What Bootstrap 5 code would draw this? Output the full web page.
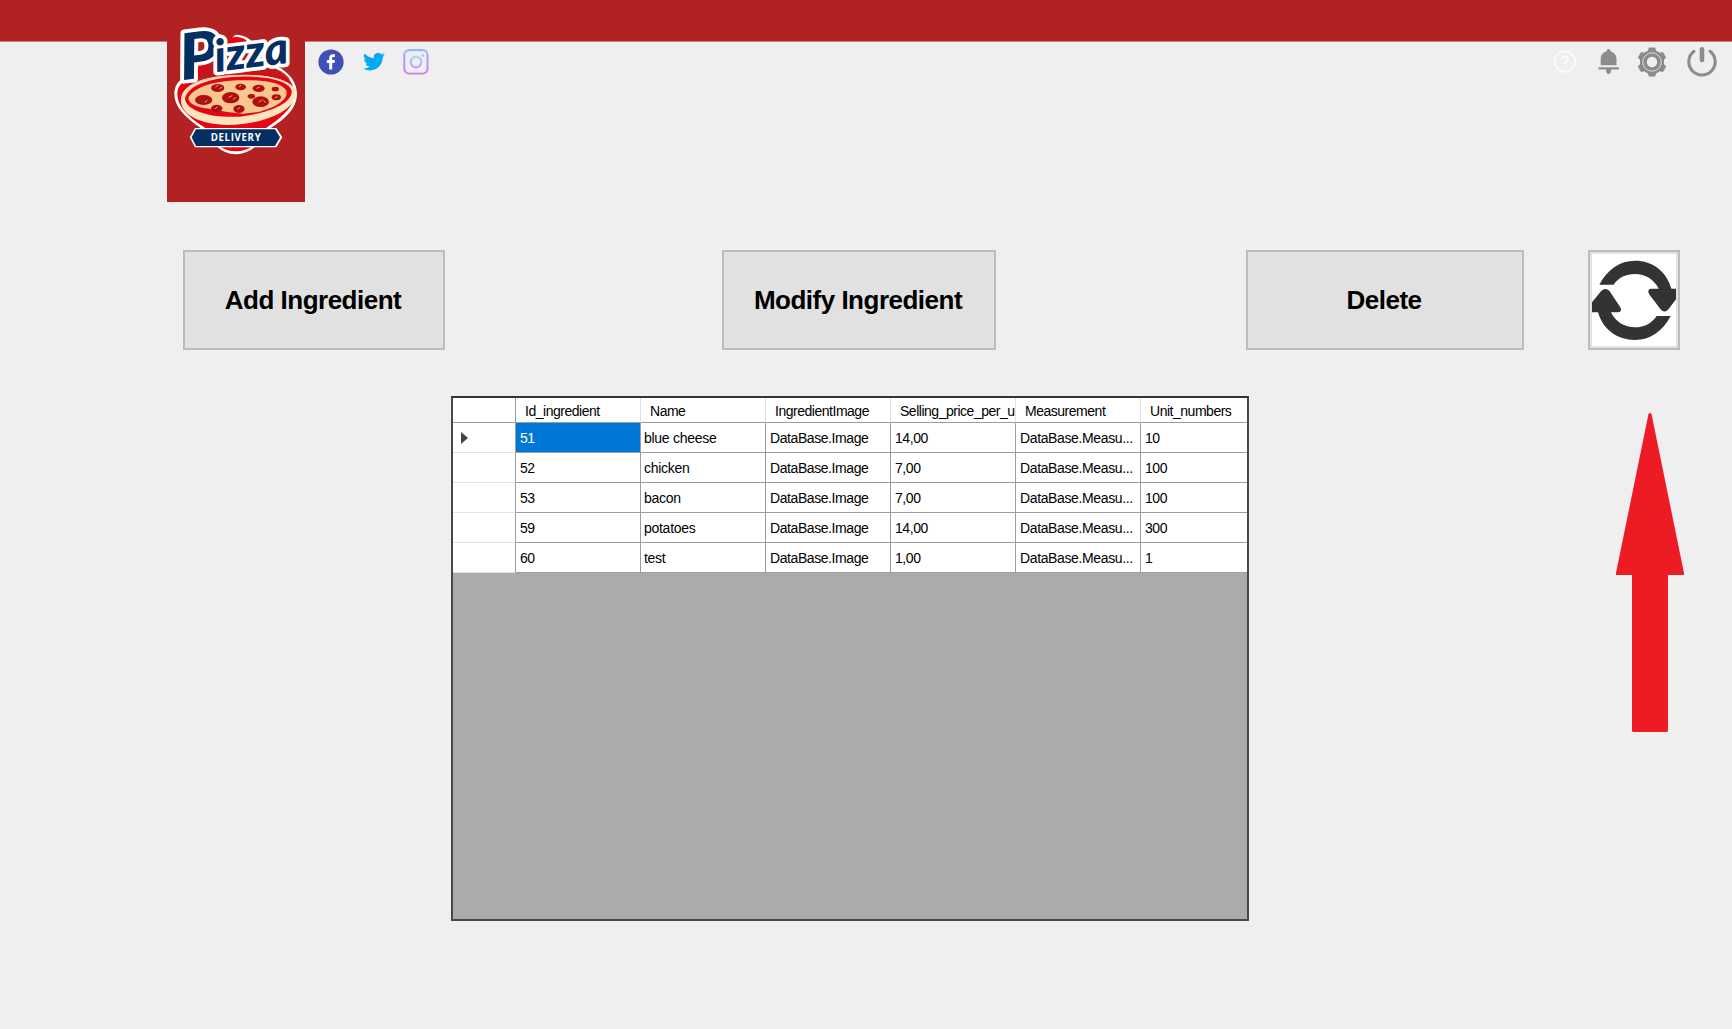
<!DOCTYPE html>
<html lang="en">
<head>
<meta charset="utf-8">
<meta name="viewport" content="width=device-width, initial-scale=1">
<title>Pizza Delivery - Ingredients</title>
<link rel="stylesheet" href="https://cdn.jsdelivr.net/npm/bootstrap@5.3.0/dist/css/bootstrap.min.css">
<style>
  body { background: #efefef; font-family: "Liberation Sans", Arial, sans-serif; color: #000; height: 1029px; overflow: hidden; }
  .app-header { height: 202px; padding-left: 167px; padding-right: 15px; background: linear-gradient(#b22222 0 41px, #c98080 41px 42px, transparent 42px); }
  .logo-tab { width: 138px; height: 202px; background: #b22222; }
  .logo-tab svg { display: block; }
  .social { padding: 49px 0 0 13px; gap: 16.5px; }
  .tools { padding-top: 47px; color: #8c8c8c; }
  .help-icon { margin-right: 21px; }
  .bell-icon { margin-right: 17px; }
  .gear-icon { margin-right: 20px; }
  .actions { padding: 48px 52px 0 183px; }
  .btn-win { height: 100px; border: 2px solid #bdbdbd; border-radius: 0; background: #e1e1e1; color: #000; font-size: 26px; font-weight: 700; letter-spacing: -.5px; padding: 0 2px 0 0; }
  .btn-win:hover { background: #e5f1fb; border-color: #0078d7; }
  .w-add { width: 262px; margin-right: 277px; }
  .w-modify { width: 274px; margin-right: 250px; }
  .w-delete { width: 278px; margin-right: 64px; }
  .w-refresh { width: 92px; padding: 0; }
  .content-area { padding: 46px 48px 0 451px; }
  .grid-box { width: 798px; height: 525px; border: 2px solid #474747; border-top-color: #333; background: #ababab; overflow: hidden; }
  .grid-table { width: 794px; table-layout: fixed; border-collapse: separate; border-spacing: 0; font-size: 14px; line-height: 18px; letter-spacing: -.42px; }
  .grid-table th, .grid-table td { height: 30px; padding: 0 0 0 4px; background: #fff; border-right: 1px solid #9c9c9c; border-bottom: 1px solid #9c9c9c; white-space: nowrap; vertical-align: middle; font-weight: 400; }
  .grid-table td:nth-child(3) { padding-left: 3px; letter-spacing: -.28px; }
  .grid-table td:nth-child(6) { letter-spacing: -.37px; }
  .grid-table thead th { height: 25px; padding: 1px 0 0 9px; border-right-color: #e2e2e2; letter-spacing: -.48px; }
  .grid-table thead th:first-child { border-right-color: #9c9c9c; }
  .grid-table tbody th { border-bottom-color: #e2e2e2; padding-left: 8px; }
  .grid-table tr > :last-child { border-right: 0; }
  .grid-table td.picked { background: #0078d7; color: #fff; }
  .arrow-mark { margin-top: 17px; }
</style>
<script src="https://cdn.jsdelivr.net/npm/bootstrap@5.3.0/dist/js/bootstrap.bundle.min.js"></script>
</head>
<body>
<header class="app-header d-flex align-items-start">
  <div class="logo-tab flex-shrink-0">
    <svg width="138" height="202" viewBox="22 -60 414 606">
      <!-- emblem body -->
      <path d="M228 44C258 46 276 56 290 84L352 138C392 160 412 188 412 224C410 262 386 290 330 326L290 378Q260 403 228 403T170 378L126 326C72 290 44 258 44 222C44 200 54 184 72 174Z" fill="#fff"/>
      <path d="M228 50C254 52 268 62 280 90L346 146C388 168 404 192 404 224C402 256 378 284 322 322L284 376Q258 394 228 394T176 376L134 322C78 286 53 256 53 222C53 204 60 194 74 182L180 60Z" fill="#e30613"/>
      <path d="M190 84L270 84L350 146Q380 158 392 180Q340 156 250 160Q150 164 100 194L120 166Z" fill="#b22222" opacity=".75"/>
      <!-- pizza -->
      <path d="M64 236C68 196 130 170 236 166C330 162 404 180 408 220C410 270 316 314 204 315C120 312 60 284 64 236Z" fill="#fee3bd"/>
      <path d="M76 236C82 200 140 174 236 170C322 167 390 184 396 213C398 252 322 280 240 290C150 294 80 272 76 236Z" fill="#e30613"/>
      <path d="M86 236C94 208 150 184 236 181C310 178 368 188 380 212C388 238 350 262 296 276L250 281Q200 277 150 266Q92 260 86 236Z" fill="#f9c690"/>
      <path d="M68 238C66 190 140 168 236 166C310 164 390 176 408 212" fill="none" stroke="#f3d8b8" stroke-width="3"/>
      <g fill="#ae1010">
        <ellipse cx="132" cy="240" rx="26" ry="15"/><ellipse cx="174" cy="204" rx="20" ry="12"/>
        <ellipse cx="213" cy="233" rx="26" ry="17"/><ellipse cx="243" cy="201" rx="16" ry="10"/>
        <ellipse cx="297" cy="205" rx="18" ry="11"/><ellipse cx="347" cy="207" rx="11" ry="7"/>
        <ellipse cx="275" cy="229" rx="11" ry="7"/><ellipse cx="303" cy="245" rx="25" ry="16"/>
        <ellipse cx="350" cy="232" rx="14" ry="9"/><ellipse cx="171" cy="265" rx="17" ry="11"/>
        <ellipse cx="238" cy="267" rx="17" ry="12"/>
      </g>
      <path d="M168 201l7-5M180 206l6-4M208 232l9-5M221 238l6-5M239 200l5-4M292 205l7-4M298 246l9-6M312 242l5 5M167 266l6-5M234 268l6-5M347 233l5-3M136 246l6-4" stroke="#f9c690" stroke-width="2.500" stroke-linecap="round"/>
      <!-- ribbon -->
      <path d="M106 324H350L368 352L350 382H106L90 352Z" fill="#fff"/>
      <path d="M109 328H346L361 352L346 378H109L96 352Z" fill="#052e63"/>
      <text x="228" y="362" text-anchor="middle" font-family="Open Sans, sans-serif" font-weight="700" font-size="29" textLength="150" fill="#fff">DELIVERY</text>
      <!-- wordmark -->
      <g transform="rotate(-7 70 180)" font-family="Lato, sans-serif" font-weight="900" font-style="italic" fill="#052e63" stroke="#fff" stroke-width="22" stroke-linejoin="round" paint-order="stroke">
        <text x="66" y="180" font-size="192" textLength="122" lengthAdjust="spacingAndGlyphs">P</text>
        <text x="172" y="168" font-size="134" textLength="222" lengthAdjust="spacingAndGlyphs">izza</text>
      </g>
    </svg>
  </div>
  <div class="social d-flex">
    <svg width="26" height="26" viewBox="0 0 26 26"><circle cx="13" cy="13" r="12.6" fill="#3f51b5"/><path d="M11.2 20.6V14H8.8v-3h2.4V9.2c0-2.6 1.3-3.9 3.7-3.9h2v2.8h-1.4c-1 0-1.3.4-1.3 1.3V11h2.7l-.4 3h-2.3v6.6z" fill="#fff"/></svg>
    <svg width="26" height="26" viewBox="0 0 48 48"><path d="M44 10.800c-1.500.7-3.100 1.100-4.700 1.300 1.700-1 3-2.600 3.600-4.500-1.600.9-3.300 1.600-5.200 2a8.200 8.200 0 0 0-14 7.500C16.900 16.800 10.800 13.500 6.700 8.500A8.200 8.200 0 0 0 9.200 19.500c-1.300 0-2.600-.4-3.700-1v.1c0 4 2.800 7.300 6.600 8-1.200.3-2.400.4-3.700.1 1 3.300 4.100 5.700 7.700 5.700A16.500 16.500 0 0 1 4 35.800 23.300 23.300 0 0 0 16.600 39.500c15.100 0 23.300-12.500 23.300-23.300v-1.100c1.600-1.100 3-2.600 4.100-4.300" fill="#03a9f4"/></svg>
    <svg width="26" height="26" viewBox="0 0 26 26"><defs><linearGradient id="ig" x1="0" y1="0" x2="0" y2="26" gradientUnits="userSpaceOnUse"><stop offset="0" stop-color="#8dbcf8"/><stop offset="1" stop-color="#d778fa"/></linearGradient><linearGradient id="ig2" x1="0" y1="7" x2="0" y2="19" gradientUnits="userSpaceOnUse"><stop offset="0" stop-color="#9fdcf8"/><stop offset="1" stop-color="#c49cf6"/></linearGradient></defs><rect x="1.200" y="1" width="23.400" height="23.600" rx="5" fill="#e4e0f5" stroke="url(#ig)" stroke-width="1.900"/><rect x="3" y="3" width="20" height="20" rx="4" fill="#efefef"/><circle cx="13" cy="13" r="5.300" fill="none" stroke="url(#ig2)" stroke-width="2.200"/><circle cx="19.700" cy="6.500" r="1.500" fill="#b9c9f6"/></svg>
  </div>
  <div class="tools d-flex ms-auto">
    <svg width="24" height="30" viewBox="0 0 24 30" class="help-icon"><circle cx="12" cy="14.600" r="10.200" fill="none" stroke="#fbfbfb" stroke-width="1.800"/><path d="M9 12.500C9 8.500 15.200 8.500 15.200 12.300 15.200 14.500 12.200 14.700 12.200 17" fill="none" stroke="#fafafa" stroke-width="2.200"/><circle cx="12.200" cy="19.500" r="1.300" fill="#fafafa"/></svg>
    <svg width="22" height="30" viewBox="0 0 22 30" class="bell-icon"><path d="M2.700 18.300V12C2.700 8 5 5.300 8.700 4.200V3.700Q8.700 2 10.600 2T12.500 3.700V4.200C16 5.300 18.500 8 18.500 12V18.300ZM.6 20.300H20.800V22.400H.6ZM8 22.400H13.200Q13 27 10.600 27T8 22.400Z" fill="currentColor"/></svg>
    <svg width="30" height="30" viewBox="-15 -15 30 30" class="gear-icon"><g fill="currentColor"><circle r="12"/><g id="cog"><path d="M-3.200-14.500H3.200L4.500-10H-4.500Z"/></g><use href="#cog" transform="rotate(60)"/><use href="#cog" transform="rotate(120)"/><use href="#cog" transform="rotate(180)"/><use href="#cog" transform="rotate(240)"/><use href="#cog" transform="rotate(300)"/></g><circle r="9.200" fill="none" stroke="#dcdcdc" stroke-width="1"/><circle r="5.200" fill="#efefef"/></svg>
    <svg width="30" height="30" viewBox="0 0 30 30"><path d="M7 4.300A13.200 13.200 0 1 0 23 4.300" fill="none" stroke="currentColor" stroke-width="3" stroke-linecap="round"/><path d="M15 2.300V13" stroke="currentColor" stroke-width="4.600" stroke-linecap="round"/></svg>
  </div>
</header>

<div class="actions d-flex">
  <button type="button" class="btn btn-win w-add">Add Ingredient</button>
  <button type="button" class="btn btn-win w-modify">Modify Ingredient</button>
  <button type="button" class="btn btn-win w-delete">Delete</button>
  <button type="button" class="btn btn-win w-refresh" aria-label="Refresh"><svg class="d-block" width="88" height="96" viewBox="60 36 264 288"><path d="M66 42H318V318H66Z" fill="#fff"/><g fill="#333"><path d="M88 134C112 88 150 62 195 62C248 62 290 94 304 146H318V178L296 207Q284 222 271 207L237 162Q230 146 246 146H266C252 118 226 102 195 102C168 102 146 112 131 134Z"/><path d="M302 228C278 274 240 300 195 300C142 300 98 268 84 217H66V187L93 154Q106 140 119 154L151 202Q158 216 144 217H123C137 246 164 262 195 262C222 262 246 250 260 228Z"/></g></svg></button>
</div>

<main class="content-area d-flex justify-content-between align-items-start">
  <div class="grid-box">
    <table class="grid-table">
      <colgroup><col style="width:63px"><col style="width:125px"><col style="width:125px"><col style="width:125px"><col style="width:125px"><col style="width:125px"><col style="width:106px"></colgroup>
      <thead><tr><th></th><th>Id_ingredient</th><th>Name</th><th>IngredientImage</th><th>Selling_price_per_u</th><th>Measurement</th><th>Unit_numbers</th></tr></thead>
      <tbody>
        <tr><th><svg class="d-block" width="8" height="12" viewBox="0 0 8 12"><path d="M0 0L7 6L0 12Z" fill="#444"/></svg></th><td class="picked">51</td><td>blue cheese</td><td>DataBase.Image</td><td>14,00</td><td>DataBase.Measu...</td><td>10</td></tr>
        <tr><th></th><td>52</td><td>chicken</td><td>DataBase.Image</td><td>7,00</td><td>DataBase.Measu...</td><td>100</td></tr>
        <tr><th></th><td>53</td><td>bacon</td><td>DataBase.Image</td><td>7,00</td><td>DataBase.Measu...</td><td>100</td></tr>
        <tr><th></th><td>59</td><td>potatoes</td><td>DataBase.Image</td><td>14,00</td><td>DataBase.Measu...</td><td>300</td></tr>
        <tr><th></th><td>60</td><td>test</td><td>DataBase.Image</td><td>1,00</td><td>DataBase.Measu...</td><td>1</td></tr>
      </tbody>
    </table>
  </div>
  <svg class="arrow-mark" width="68" height="319" viewBox="0 0 68 319"><path d="M32.500 1Q34 -1 35.500 1L68 160V162H52V318L51 319H17L16 318V162H0V160Z" fill="#ed1c24"/></svg>
</main>
</body>
</html>
